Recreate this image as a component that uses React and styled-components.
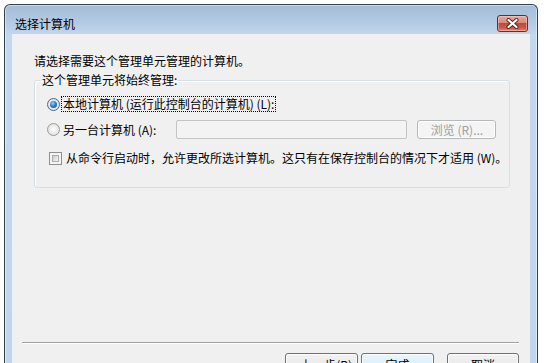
import React from 'react';
import styled, { createGlobalStyle } from 'styled-components';

const GlobalStyle = createGlobalStyle`
	html, body {
		margin: 0;
		padding: 0;
		background: #ffffff;
		overflow: hidden;
	}
	body {
		font-family: "Noto Sans CJK SC", "Liberation Sans", sans-serif;
		font-size: 12px;
		color: #000;
	}
`;

const Window = styled.div`
	margin: 4px 0 0 4px;
	width: 534px;
	box-sizing: border-box;
	border: 1px solid #34414f;
	border-bottom: none;
	border-radius: 6px 6px 0 0;
	background: linear-gradient(to bottom, #a4bcd8 0px, #b6cce5 20px, #c3d7ee 30px, #c1d6ee 100%);
	box-shadow: inset 0 0 0 1px rgba(255, 255, 255, 0.45);
	padding: 0 7px;
	display: flex;
	flex-direction: column;
`;

const TitleBar = styled.div`
	height: 29px;
	display: flex;
	align-items: flex-end;
	justify-content: space-between;
	padding: 0 2px 2px 3px;
	box-sizing: border-box;
`;

const Title = styled.div`
	line-height: 17px;
	font-size: 12px;
	color: #000;
`;

const CloseButton = styled.div`
	width: 31px;
	height: 17px;
	box-sizing: border-box;
	border: 1px solid #6d2b23;
	border-radius: 3px;
	background: linear-gradient(to bottom, #e9a99b 0%, #d88a7b 45%, #c2473a 50%, #cc5a49 80%, #e08a6e 100%);
	box-shadow: inset 0 0 0 1px rgba(255, 220, 210, 0.45);
	display: flex;
	align-items: center;
	justify-content: center;
`;

const Client = styled.div`
	background: #f0f0f0;
	height: 353px;
	display: flex;
	flex-direction: column;
`;

const Intro = styled.div`
	margin: 19px 0 0 22px;
	line-height: 16px;
`;

const Group = styled.fieldset`
	margin: 4px 0 0 22px;
	width: 475px;
	box-sizing: border-box;
	border: 1px solid #d5dfe5;
	border-radius: 3px;
	padding: 8px 0 20px 12px;
	box-shadow: 1px 1px 0 #ffffff inset;
`;

const Legend = styled.legend`
	padding: 0 1px;
	margin-left: -6px;
	line-height: 14px;
`;

const Row = styled.div`
	display: flex;
	align-items: center;
	height: ${(p) => p.$h || 18}px;
	margin-top: ${(p) => p.$gap || 0}px;
`;

const Radio = styled.span`
	width: 13px;
	height: 13px;
	box-sizing: border-box;
	border-radius: 50%;
	border: 1px solid ${(p) => (p.$checked ? '#3a6ea5' : '#9a9a9a')};
	background: radial-gradient(circle at 50% 50%, #ffffff 0%, #e8e8e8 60%, #d0d0d0 100%);
	display: flex;
	align-items: center;
	justify-content: center;
	flex: none;
	&::after {
		content: '';
		display: ${(p) => (p.$checked ? 'block' : 'none')};
		width: 7px;
		height: 7px;
		border-radius: 50%;
		background: radial-gradient(circle at 40% 35%, #9ad3fb 0%, #2d7fd0 45%, #104f8f 100%);
	}
`;

const CheckBox = styled.span`
	width: 13px;
	height: 13px;
	box-sizing: border-box;
	margin-left: 2px;
	border: 1px solid #8e8f8f;
	background: #f4f4f4;
	padding: 2px;
	flex: none;
	&::after {
		content: '';
		display: block;
		width: 100%;
		height: 100%;
		box-sizing: border-box;
		border: 1px solid #ababab;
		background: linear-gradient(135deg, #cbcbcb 0%, #eaeaea 70%, #f6f6f6 100%);
	}
`;

const Label = styled.span`
	margin-left: ${(p) => p.$indent || 5}px;
	line-height: 14px;
	white-space: nowrap;
	padding: 0 1px;
	border: 1px ${(p) => (p.$focused ? 'dotted #000' : 'solid transparent')};
`;

const TextField = styled.div`
	margin-left: 18px;
	width: 231px;
	height: 19px;
	box-sizing: border-box;
	border: 1px solid #c4c4c4;
	border-radius: 2px;
	background: #f3f3f3;
`;

const Button = styled.div`
	width: ${(p) => p.$w || 73}px;
	height: ${(p) => p.$height || 23}px;
	margin-left: ${(p) => p.$gap || 0}px;
	box-sizing: border-box;
	border: 1px solid ${(p) => (p.$disabled ? '#b6b9bc' : p.$default ? '#3c7fb1' : '#707070')};
	border-radius: 3px;
	background: ${(p) =>
		p.$disabled
			? '#f4f4f4'
			: p.$default
			? 'linear-gradient(to bottom, #eaf6fd 0%, #d9f0fc 50%, #bee6fd 51%, #a7d9f5 100%)'
			: 'linear-gradient(to bottom, #f2f2f2 0%, #ebebeb 50%, #dddddd 51%, #cfcfcf 100%)'};
	box-shadow: inset 0 0 0 1px rgba(255, 255, 255, 0.8);
	color: ${(p) => (p.$disabled ? '#a0a0a0' : '#000')};
	display: flex;
	align-items: center;
	justify-content: center;
	line-height: 14px;
	flex: none;
	white-space: nowrap;
`;

const Footer = styled.div`
	margin-top: auto;
	padding: 0 11px 11px 10px;
`;

const Separator = styled.div`
	height: 1px;
	background: #a0a0a0;
	border-bottom: 1px solid #ffffff;
`;

const ButtonRow = styled.div`
	display: flex;
	justify-content: flex-end;
	margin-top: 9px;
`;

const CloseIcon = () => (
	<svg width="13" height="11" viewBox="0 0 13 11">
		<path d="M2.5 2 L10.5 9 M10.5 2 L2.5 9" stroke="#5a1d16" strokeWidth="4" strokeLinecap="round" />
		<path d="M2.5 2 L10.5 9 M10.5 2 L2.5 9" stroke="#ffffff" strokeWidth="2.2" strokeLinecap="round" />
	</svg>
);

const App = () => {
	return (
		<>
			<GlobalStyle />
			<Window>
				<TitleBar>
					<Title>选择计算机</Title>
					<CloseButton>
						<CloseIcon />
					</CloseButton>
				</TitleBar>
				<Client>
					<Intro>请选择需要这个管理单元管理的计算机。</Intro>
					<Group>
						<Legend>这个管理单元将始终管理:</Legend>
						<Row>
							<Radio $checked />
							<Label $indent={1} $focused>本地计算机 (运行此控制台的计算机) (L):</Label>
						</Row>
						<Row $gap={7} $h={19}>
							<Radio />
							<Label $indent={1}>另一台计算机 (A):</Label>
							<TextField />
							<Button $w={79} $height={19} $gap={10} $disabled>浏览 (R)...</Button>
						</Row>
						<Row $gap={10}>
							<CheckBox />
							<Label $indent={2}>从命令行启动时，允许更改所选计算机。这只有在保存控制台的情况下才适用 (W)。</Label>
						</Row>
					</Group>
					<Footer>
						<Separator />
						<ButtonRow>
							<Button>&lt; 上一步(B)</Button>
							<Button $gap={3} $default>完成</Button>
							<Button $w={72} $gap={13}>取消</Button>
						</ButtonRow>
					</Footer>
				</Client>
			</Window>
		</>
	);
};

export default App;
